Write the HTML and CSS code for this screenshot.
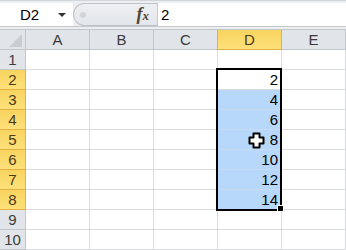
FILE: index.html
```html
<!DOCTYPE html>
<html lang="en">
<head>
    <meta charset="UTF-8">
    <title>Fill series</title>
    <link rel="stylesheet" href="styles.css">
</head>
<body>

    <div class="formula-bar">
        <div class="bar-row">
            <div class="name-box">
                <span class="cell-ref">D2</span>
                <span class="caret"></span>
            </div>
            <div class="fx-zone">
                <span class="grip"></span>
                <span class="fx">f<span class="fx-x">x</span></span>
            </div>
            <div class="formula-input">2</div>
        </div>
    </div>

    <div class="sheet">
        <div class="corner"><span class="corner-tri"></span></div>
        <div class="col-head">A</div>
        <div class="col-head">B</div>
        <div class="col-head">C</div>
        <div class="col-head active">D</div>
        <div class="col-head">E</div>

        <div class="row-head">1</div>
        <div class="cell"></div><div class="cell"></div><div class="cell"></div><div class="cell"></div><div class="cell"></div>

        <div class="row-head active">2</div>
        <div class="cell"></div><div class="cell"></div><div class="cell"></div><div class="cell num">2</div><div class="cell"></div>

        <div class="row-head active">3</div>
        <div class="cell"></div><div class="cell"></div><div class="cell"></div><div class="cell num sel">4</div><div class="cell"></div>

        <div class="row-head active">4</div>
        <div class="cell"></div><div class="cell"></div><div class="cell"></div><div class="cell num sel">6</div><div class="cell"></div>

        <div class="row-head active">5</div>
        <div class="cell"></div><div class="cell"></div><div class="cell"></div><div class="cell num sel">8</div><div class="cell"></div>

        <div class="row-head active">6</div>
        <div class="cell"></div><div class="cell"></div><div class="cell"></div><div class="cell num sel">10</div><div class="cell"></div>

        <div class="row-head active">7</div>
        <div class="cell"></div><div class="cell"></div><div class="cell"></div><div class="cell num sel">12</div><div class="cell"></div>

        <div class="row-head active">8</div>
        <div class="cell"></div><div class="cell"></div><div class="cell"></div><div class="cell num sel">14</div><div class="cell"></div>

        <div class="row-head">9</div>
        <div class="cell"></div><div class="cell"></div><div class="cell"></div><div class="cell"></div><div class="cell"></div>

        <div class="row-head">10</div>
        <div class="cell"></div><div class="cell"></div><div class="cell"></div><div class="cell"></div><div class="cell"></div>

        <!-- selection frame + fill handle + mouse cursor lie over the grid -->
        <div class="selection"></div>
        <div class="fill-handle"></div>
        <svg class="cursor" width="17" height="17" viewBox="0 0 17 17">
            <path d="M5.5 1.5h6v4h4v6h-4v4h-6v-4h-4v-6h4z" fill="#fff" stroke="#000" stroke-width="2" stroke-linejoin="round"/>
        </svg>
    </div>

</body>
</html>
```

FILE: styles.css
```css
body {
    margin: 0;
    width: 346px;
    height: 250px;
    overflow: hidden;
    font-family: "Liberation Sans", Arial, sans-serif;
    font-size: 15px;
    color: #000;
    background: #fff;
}

/* formula bar */
.formula-bar {
    box-sizing: border-box;
    height: 30px;
    padding-top: 2px;
    background: #eceef1;
    border-top: 1px solid #d2d6db;
    border-bottom: 1px solid #c2c6cb;
}

.bar-row {
    display: flex;
    height: 23px;
    border-bottom: 1px solid #c5c9ce;
}

.name-box {
    width: 73px;
    display: flex;
    align-items: center;
    justify-content: space-between;
    padding: 0 7px 0 20px;
    box-sizing: border-box;
    background: #fff;
}

.caret {
    width: 0;
    height: 0;
    border-left: 4px solid transparent;
    border-right: 4px solid transparent;
    border-top: 4px solid #333;
}

.fx-zone {
    width: 84px;
    display: flex;
    align-items: center;
    justify-content: space-between;
    padding: 0 8px 0 6px;
    box-sizing: border-box;
    background: linear-gradient(#eef0f3, #e2e5e9);
    border: 1px solid #bfc3c8;
    border-right: none;
    border-radius: 12px 0 0 12px;
}

.grip {
    width: 6px;
    height: 6px;
    border-radius: 50%;
    background: #d2d5d9;
}

.fx {
    font-family: "Liberation Serif", serif;
    font-style: italic;
    font-weight: bold;
    font-size: 18px;
    color: #4e4436;
}

.fx-x {
    font-size: 13px;
}

.formula-input {
    flex: 1;
    display: flex;
    align-items: center;
    padding-left: 3px;
    background: #fff;
    border-left: 1px solid #c5c9ce;
}

/* grid */
.sheet {
    position: relative;
    display: grid;
    grid-template-columns: 26px repeat(5, 64px);
    grid-template-rows: repeat(11, 20px);
}

.corner,
.col-head,
.row-head,
.cell {
    box-sizing: border-box;
    border-right: 1px solid #dadcdd;
    border-bottom: 1px solid #dadcdd;
}

.corner {
    position: relative;
    background: #e1e4e8;
    border-color: #c2c6cb;
}

.corner-tri {
    position: absolute;
    right: 3px;
    bottom: 2px;
    width: 0;
    height: 0;
    border-left: 13px solid transparent;
    border-bottom: 13px solid #c9ccd0;
}

.col-head,
.row-head {
    display: flex;
    align-items: center;
    justify-content: center;
    background: #e1e4e8;
    border-color: #c2c6cb;
    color: #3b3b3b;
}

.col-head.active,
.row-head.active {
    background: linear-gradient(#f8d45f, #fee07a);
    border-color: #e3b140;
    color: #4a3a1c;
}

.col-head.active {
    border-left: 1px solid #e3b140;
    margin-left: -1px;
}

.cell.num {
    display: flex;
    align-items: center;
    justify-content: flex-end;
    padding-right: 3px;
}

.cell.sel {
    background: #b8d8fb;
    border-bottom-color: #c6dcf1;
}

.selection {
    position: absolute;
    left: 216px;
    top: 38px;
    width: 66px;
    height: 143px;
    box-sizing: border-box;
    border: 2px solid #000;
}

.fill-handle {
    position: absolute;
    left: 278px;
    top: 176px;
    width: 5px;
    height: 5px;
    background: #000;
    box-shadow: 0 0 0 1px #fff;
}

.cursor {
    position: absolute;
    left: 248px;
    top: 102px;
}
```
